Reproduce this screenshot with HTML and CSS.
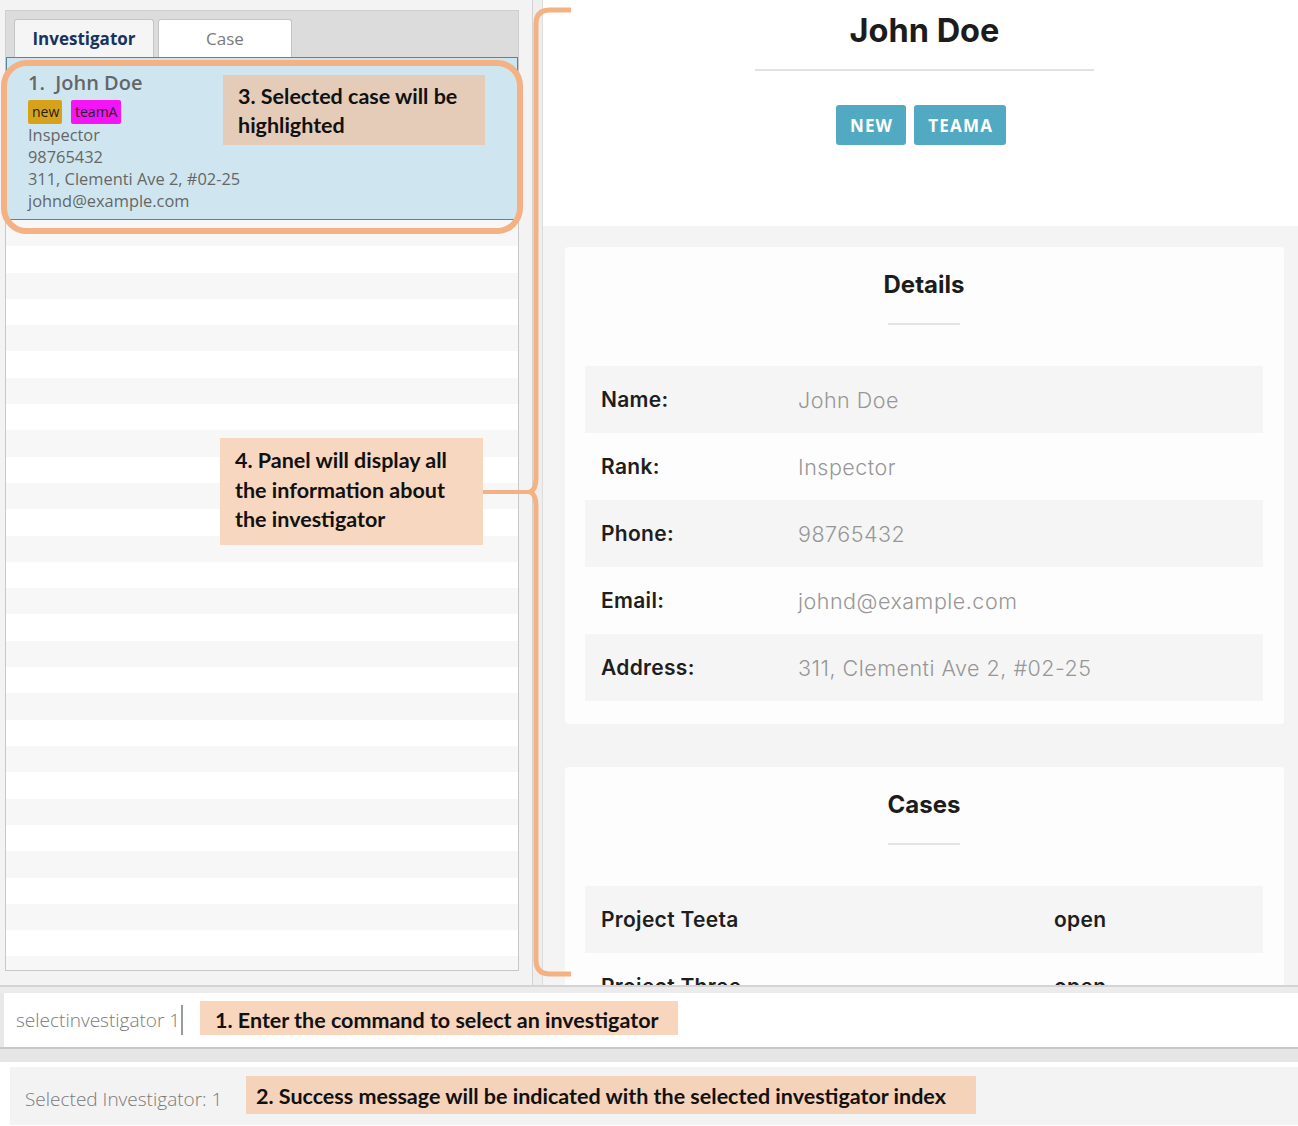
FILE: index.html
```html
<!DOCTYPE html>
<html>
<head>
<meta charset="utf-8">
<title>Investigator</title>
<link rel="stylesheet" href="styles.css">
</head>
<body>
<div class="app">
  <div class="main">
    <div class="left">
      <div class="tabs">
        <div class="tab tab-active">Investigator</div>
        <div class="tab">Case</div>
      </div>
      <div class="list">
        <div class="card">
          <div class="card-name">1.&nbsp; John Doe</div>
          <div class="tags">
            <span class="tag tag-new">new</span>
            <span class="tag tag-team">teamA</span>
          </div>
          <div class="card-line">Inspector</div>
          <div class="card-line">98765432</div>
          <div class="card-line">311, Clementi Ave 2, #02-25</div>
          <div class="card-line">johnd@example.com</div>
        </div>
        <div class="empty-rows"></div>
      </div>
    </div>
    <div class="divider"></div>
    <div class="right">
      <div class="profile">
        <h1 class="profile-name">John Doe</h1>
        <div class="profile-rule"></div>
        <div class="badges">
          <span class="badge">NEW</span>
          <span class="badge">TEAMA</span>
        </div>
      </div>
      <div class="content">
        <section class="panel">
          <h2 class="panel-title">Details</h2>
          <div class="panel-rule"></div>
          <div class="rows">
            <div class="row"><span class="label">Name:</span><span class="value">John Doe</span></div>
            <div class="row"><span class="label">Rank:</span><span class="value">Inspector</span></div>
            <div class="row"><span class="label">Phone:</span><span class="value">98765432</span></div>
            <div class="row"><span class="label">Email:</span><span class="value">johnd@example.com</span></div>
            <div class="row"><span class="label">Address:</span><span class="value">311, Clementi Ave 2, #02-25</span></div>
          </div>
        </section>
        <section class="panel">
          <h2 class="panel-title">Cases</h2>
          <div class="panel-rule"></div>
          <div class="rows">
            <div class="row case-row"><span class="case-name">Project Teeta</span><span class="case-status">open</span></div>
            <div class="row case-row"><span class="case-name">Project Three</span><span class="case-status">open</span></div>
          </div>
        </section>
      </div>
    </div>
  </div>
  <div class="sep-top"></div>
  <div class="command">
    <span class="command-text">selectinvestigator 1</span><span class="caret"></span>
  </div>
  <div class="sep-bottom"></div>
  <div class="status-wrap">
    <div class="status">Selected Investigator: 1</div>
  </div>

  <div class="highlight-ring"></div>
  <div class="note note-3">3. Selected case will be<br>highlighted</div>
  <div class="note note-4">4. Panel will display all<br>the information about<br>the investigator</div>
  <div class="note note-1">1. Enter the command to select an investigator</div>
  <div class="note note-2">2. Success message will be indicated with the selected investigator index</div>
  <svg class="brace" width="100" height="990" viewBox="480 0 100 990">
    <path d="M571 10 H550 Q536 10 536 24 V478 Q536 490 530 492 Q536 494 536 506 V960 Q536 974 550 974 H571" fill="none" stroke="#f4b183" stroke-width="5"/>
    <path d="M483 492 H531" fill="none" stroke="#f4b183" stroke-width="4"/>
  </svg>
</div>
</body>
</html>
```

FILE: styles.css
```css
* { box-sizing: border-box; }
html, body { margin: 0; padding: 0; }
body {
  width: 1298px;
  height: 1126px;
  background: #ffffff;
  font-family: "Open Sans", "Noto Sans", sans-serif;
  overflow: hidden;
}
.app {
  position: relative;
  width: 1298px;
  height: 1126px;
}
.main {
  display: flex;
  height: 985px;
  background: #f3f3f3;
}
.left {
  width: 532px;
  padding: 10px 13px 14px 5px;
  display: flex;
  flex-direction: column;
}
.tabs {
  height: 47px;
  background: #dcdcdc;
  border: 1px solid #cfcfcf;
  border-bottom: none;
  display: flex;
  align-items: flex-end;
  padding-left: 8px;
  gap: 4px;
}
.tab {
  height: 38px;
  background: #ffffff;
  border: 1px solid #c4c4c4;
  border-bottom: none;
  border-radius: 3px 3px 0 0;
  display: flex;
  align-items: center;
  justify-content: center;
  font-size: 17px;
  color: #7a7a7a;
  width: 134px;
}
.tab-active {
  width: 140px;
  background: #f5f5f5;
  color: #17335e;
  font-weight: 700;
}
.list {
  flex: 1;
  border: 1px solid #c8c8c8;
  border-top: none;
  background: #ffffff;
  display: flex;
  flex-direction: column;
}
.card {
  height: 163px;
  background: #cfe6f0;
  border: 1px solid #4d8aa1;
  padding: 12px 0 0 21px;
  color: #666666;
}
.card-name {
  font-size: 20px;
  line-height: 26px;
  font-weight: 600;
  color: #666666;
}
.tags {
  display: flex;
  gap: 9px;
  margin: 4px 0 0;
  height: 24px;
}
.tag {
  height: 24px;
  line-height: 24px;
  font-size: 14px;
  color: #222;
  padding: 0 4px;
  border-radius: 2px;
}
.tag-new { background: #d7a21a; width: 34px; }
.tag-team { background: #f514f5; width: 50px; }
.card-line {
  font-size: 16.4px;
  line-height: 22px;
  color: #666666;
}
.empty-rows {
  flex: 1;
  background: repeating-linear-gradient(to bottom, #f7f7f7 0, #f7f7f7 26.3px, #ffffff 26.3px, #ffffff 52.6px);
}
.divider {
  width: 11px;
  background: #eeeeee;
  border-left: 1px solid #d3d3d3;
  border-right: 1px solid #dcdcdc;
}
.right {
  flex: 1;
  display: flex;
  flex-direction: column;
  overflow: hidden;
  font-family: "Inter", "Lato", sans-serif;
}
.profile {
  height: 226px;
  background: #ffffff;
  display: flex;
  flex-direction: column;
  align-items: center;
  padding-top: 12px;
  padding-left: 8px;
}
.profile-name {
  margin: 0;
  font-size: 32.5px;
  line-height: 38px;
  font-weight: 700;
  color: #1c1c1c;
  letter-spacing: 0;
}
.profile-rule {
  width: 339px;
  height: 2px;
  background: #e2e2e2;
  margin-top: 19px;
}
.badges {
  display: flex;
  gap: 8px;
  margin-top: 34px;
  margin-right: 7px;
}
.badge {
  height: 40px;
  line-height: 42px;
  background: #52a9c2;
  color: #ffffff;
  border-radius: 3px;
  font-family: "Open Sans", sans-serif;
  font-weight: 700;
  font-size: 17px;
  letter-spacing: 1.2px;
  padding: 0 13px 0 14px;
}
.content {
  flex: 1;
  background: #f4f4f4;
  padding: 21px 14px 0 22px;
  display: flex;
  flex-direction: column;
  gap: 43px;
  overflow: hidden;
}
.panel {
  background: #fdfdfd;
  border-radius: 4px;
  padding: 23px 21px 23px 20px;
  display: flex;
  flex-direction: column;
  align-items: center;
  flex-shrink: 0;
}
.panel-title {
  margin: 0;
  font-size: 24px;
  line-height: 30px;
  font-weight: 700;
  color: #1c1c1c;
}
.panel-rule {
  width: 72px;
  height: 2px;
  background: #e4e4e4;
  margin-top: 23px;
}
.rows {
  align-self: stretch;
  margin-top: 41px;
}
.row {
  height: 67px;
  display: grid;
  grid-template-columns: 197px 1fr;
  align-items: center;
  padding-left: 16px;
}
.row:nth-child(odd) { background: #f5f5f5; }
.label {
  font-size: 21px;
  font-weight: 600;
  letter-spacing: 0.3px;
  color: #1e1e1e;
}
.value {
  font-size: 21.5px;
  font-weight: 300;
  letter-spacing: 0.5px;
  color: #979797;
}
.case-row { grid-template-columns: 453px 1fr; }
.case-name, .case-status {
  font-size: 21px;
  font-weight: 600;
  letter-spacing: 0.3px;
  color: #1e1e1e;
}
.sep-top {
  height: 8px;
  background: #ececec;
  border-top: 2px solid #d4d4d4;
}
.command {
  height: 54px;
  background: #ffffff;
  border-left: 4px solid #e8e8e8;
  display: flex;
  align-items: center;
  padding-left: 12px;
}
.command-text {
  font-size: 19px;
  color: #7a7a7a;
  font-weight: 300;
}
.caret {
  width: 2px;
  height: 30px;
  background: #9a9a9a;
  margin-left: 1px;
}
.sep-bottom {
  height: 20px;
  background: #e6e6e6;
  border-top: 2px solid #c8c8c8;
  border-bottom: 5px solid #ffffff;
}
.status-wrap {
  padding-left: 10px;
  height: 59px;
}
.status {
  height: 58px;
  background: #f3f3f3;
  display: flex;
  align-items: center;
  padding: 6px 0 0 15px;
  font-size: 19px;
  color: #7a7a7a;
  font-weight: 300;
}
.highlight-ring {
  position: absolute;
  left: 1px;
  top: 60px;
  width: 522px;
  height: 174px;
  border: 6px solid #f4b183;
  border-radius: 26px;
}
.note {
  position: absolute;
  font-family: "Lato", "Open Sans", sans-serif;
  font-weight: 700;
  font-size: 21.5px;
  color: #111111;
  background: #f8d5bd;
}
.note-3 {
  left: 223px;
  top: 75px;
  width: 262px;
  height: 70px;
  padding: 7px 0 0 15px;
  line-height: 29px;
  background: #e4ccb8;
}
.note-4 {
  left: 220px;
  top: 438px;
  width: 263px;
  height: 107px;
  padding: 8px 0 0 15px;
  line-height: 29.5px;
  background: #f8d7c0;
}
.note-1 {
  left: 200px;
  top: 1001px;
  width: 478px;
  height: 34px;
  line-height: 38px;
  padding-left: 15px;
}
.note-2 {
  left: 246px;
  top: 1076px;
  width: 730px;
  height: 38px;
  line-height: 40px;
  padding-left: 10px;
  background: #f5d3bb;
}
.brace {
  position: absolute;
  left: 480px;
  top: 0;
}
```
